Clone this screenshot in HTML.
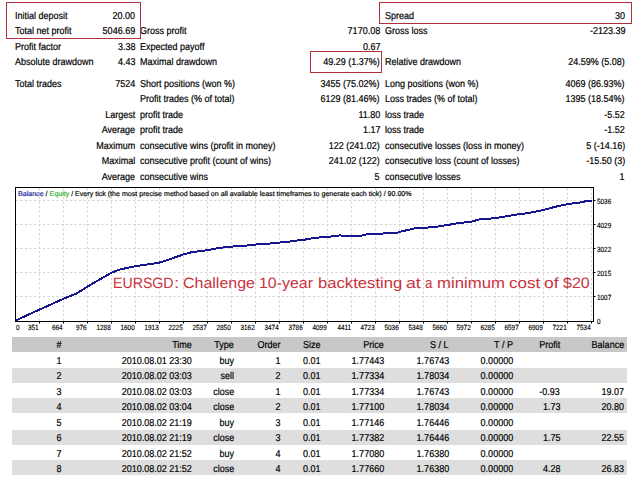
<!DOCTYPE html>
<html><head><meta charset="utf-8"><style>
html,body{margin:0;padding:0;background:#fff;}
body{width:640px;height:480px;overflow:hidden;position:relative;font-family:'Liberation Sans',sans-serif;text-rendering:geometricPrecision;}
div{white-space:nowrap;}
.s{-webkit-text-stroke:0.2px #000;}
.s2{-webkit-text-stroke:0.15px #000;}
</style></head><body>
<div class="s" style="position:absolute;left:15px;top:11.00px;font-size:10px;line-height:12px;color:#000;transform:scaleX(0.9);transform-origin:0 0;">Initial deposit</div>
<div class="s" style="position:absolute;right:505px;top:11.00px;font-size:10px;line-height:12px;color:#000;transform:scaleX(0.9);transform-origin:100% 0;text-align:right;">20.00</div>
<div class="s" style="position:absolute;left:385px;top:11.00px;font-size:10px;line-height:12px;color:#000;transform:scaleX(0.9);transform-origin:0 0;">Spread</div>
<div class="s" style="position:absolute;right:15px;top:11.00px;font-size:10px;line-height:12px;color:#000;transform:scaleX(0.9);transform-origin:100% 0;text-align:right;">30</div>
<div class="s" style="position:absolute;left:15px;top:26.00px;font-size:10px;line-height:12px;color:#000;transform:scaleX(0.9);transform-origin:0 0;">Total net profit</div>
<div class="s" style="position:absolute;right:505px;top:26.00px;font-size:10px;line-height:12px;color:#000;transform:scaleX(0.9);transform-origin:100% 0;text-align:right;">5046.69</div>
<div class="s" style="position:absolute;left:140.4px;top:26.00px;font-size:10px;line-height:12px;color:#000;transform:scaleX(0.9);transform-origin:0 0;">Gross profit</div>
<div class="s" style="position:absolute;right:260px;top:26.00px;font-size:10px;line-height:12px;color:#000;transform:scaleX(0.9);transform-origin:100% 0;text-align:right;">7170.08</div>
<div class="s" style="position:absolute;left:385px;top:26.00px;font-size:10px;line-height:12px;color:#000;transform:scaleX(0.9);transform-origin:0 0;">Gross loss</div>
<div class="s" style="position:absolute;right:15px;top:26.00px;font-size:10px;line-height:12px;color:#000;transform:scaleX(0.9);transform-origin:100% 0;text-align:right;">-2123.39</div>
<div class="s" style="position:absolute;left:15px;top:42.00px;font-size:10px;line-height:12px;color:#000;transform:scaleX(0.9);transform-origin:0 0;">Profit factor</div>
<div class="s" style="position:absolute;right:505px;top:42.00px;font-size:10px;line-height:12px;color:#000;transform:scaleX(0.9);transform-origin:100% 0;text-align:right;">3.38</div>
<div class="s" style="position:absolute;left:140.4px;top:42.00px;font-size:10px;line-height:12px;color:#000;transform:scaleX(0.9);transform-origin:0 0;">Expected payoff</div>
<div class="s" style="position:absolute;right:260px;top:42.00px;font-size:10px;line-height:12px;color:#000;transform:scaleX(0.9);transform-origin:100% 0;text-align:right;">0.67</div>
<div class="s" style="position:absolute;left:15px;top:57.00px;font-size:10px;line-height:12px;color:#000;transform:scaleX(0.9);transform-origin:0 0;">Absolute drawdown</div>
<div class="s" style="position:absolute;right:505px;top:57.00px;font-size:10px;line-height:12px;color:#000;transform:scaleX(0.9);transform-origin:100% 0;text-align:right;">4.43</div>
<div class="s" style="position:absolute;left:140.4px;top:57.00px;font-size:10px;line-height:12px;color:#000;transform:scaleX(0.9);transform-origin:0 0;">Maximal drawdown</div>
<div class="s" style="position:absolute;right:260px;top:57.00px;font-size:10px;line-height:12px;color:#000;transform:scaleX(0.9);transform-origin:100% 0;text-align:right;">49.29 (1.37%)</div>
<div class="s" style="position:absolute;left:385px;top:57.00px;font-size:10px;line-height:12px;color:#000;transform:scaleX(0.9);transform-origin:0 0;">Relative drawdown</div>
<div class="s" style="position:absolute;right:15px;top:57.00px;font-size:10px;line-height:12px;color:#000;transform:scaleX(0.9);transform-origin:100% 0;text-align:right;">24.59% (5.08)</div>
<div class="s" style="position:absolute;left:15px;top:79.00px;font-size:10px;line-height:12px;color:#000;transform:scaleX(0.9);transform-origin:0 0;">Total trades</div>
<div class="s" style="position:absolute;right:505px;top:79.00px;font-size:10px;line-height:12px;color:#000;transform:scaleX(0.9);transform-origin:100% 0;text-align:right;">7524</div>
<div class="s" style="position:absolute;left:140.4px;top:79.00px;font-size:10px;line-height:12px;color:#000;transform:scaleX(0.9);transform-origin:0 0;">Short positions (won %)</div>
<div class="s" style="position:absolute;right:260px;top:79.00px;font-size:10px;line-height:12px;color:#000;transform:scaleX(0.9);transform-origin:100% 0;text-align:right;">3455 (75.02%)</div>
<div class="s" style="position:absolute;left:385px;top:79.00px;font-size:10px;line-height:12px;color:#000;transform:scaleX(0.9);transform-origin:0 0;">Long positions (won %)</div>
<div class="s" style="position:absolute;right:15px;top:79.00px;font-size:10px;line-height:12px;color:#000;transform:scaleX(0.9);transform-origin:100% 0;text-align:right;">4069 (86.93%)</div>
<div class="s" style="position:absolute;left:140.4px;top:94.00px;font-size:10px;line-height:12px;color:#000;transform:scaleX(0.9);transform-origin:0 0;">Profit trades (% of total)</div>
<div class="s" style="position:absolute;right:260px;top:94.00px;font-size:10px;line-height:12px;color:#000;transform:scaleX(0.9);transform-origin:100% 0;text-align:right;">6129 (81.46%)</div>
<div class="s" style="position:absolute;left:385px;top:94.00px;font-size:10px;line-height:12px;color:#000;transform:scaleX(0.9);transform-origin:0 0;">Loss trades (% of total)</div>
<div class="s" style="position:absolute;right:15px;top:94.00px;font-size:10px;line-height:12px;color:#000;transform:scaleX(0.9);transform-origin:100% 0;text-align:right;">1395 (18.54%)</div>
<div class="s" style="position:absolute;right:505px;top:110.00px;font-size:10px;line-height:12px;color:#000;transform:scaleX(0.9);transform-origin:100% 0;text-align:right;">Largest</div>
<div class="s" style="position:absolute;left:140.4px;top:110.00px;font-size:10px;line-height:12px;color:#000;transform:scaleX(0.9);transform-origin:0 0;">profit trade</div>
<div class="s" style="position:absolute;right:260px;top:110.00px;font-size:10px;line-height:12px;color:#000;transform:scaleX(0.9);transform-origin:100% 0;text-align:right;">11.80</div>
<div class="s" style="position:absolute;left:385px;top:110.00px;font-size:10px;line-height:12px;color:#000;transform:scaleX(0.9);transform-origin:0 0;">loss trade</div>
<div class="s" style="position:absolute;right:15px;top:110.00px;font-size:10px;line-height:12px;color:#000;transform:scaleX(0.9);transform-origin:100% 0;text-align:right;">-5.52</div>
<div class="s" style="position:absolute;right:505px;top:125.00px;font-size:10px;line-height:12px;color:#000;transform:scaleX(0.9);transform-origin:100% 0;text-align:right;">Average</div>
<div class="s" style="position:absolute;left:140.4px;top:125.00px;font-size:10px;line-height:12px;color:#000;transform:scaleX(0.9);transform-origin:0 0;">profit trade</div>
<div class="s" style="position:absolute;right:260px;top:125.00px;font-size:10px;line-height:12px;color:#000;transform:scaleX(0.9);transform-origin:100% 0;text-align:right;">1.17</div>
<div class="s" style="position:absolute;left:385px;top:125.00px;font-size:10px;line-height:12px;color:#000;transform:scaleX(0.9);transform-origin:0 0;">loss trade</div>
<div class="s" style="position:absolute;right:15px;top:125.00px;font-size:10px;line-height:12px;color:#000;transform:scaleX(0.9);transform-origin:100% 0;text-align:right;">-1.52</div>
<div class="s" style="position:absolute;right:505px;top:141.00px;font-size:10px;line-height:12px;color:#000;transform:scaleX(0.9);transform-origin:100% 0;text-align:right;">Maximum</div>
<div class="s" style="position:absolute;left:140.4px;top:141.00px;font-size:10px;line-height:12px;color:#000;transform:scaleX(0.9);transform-origin:0 0;">consecutive wins (profit in money)</div>
<div class="s" style="position:absolute;right:260px;top:141.00px;font-size:10px;line-height:12px;color:#000;transform:scaleX(0.9);transform-origin:100% 0;text-align:right;">122 (241.02)</div>
<div class="s" style="position:absolute;left:385px;top:141.00px;font-size:10px;line-height:12px;color:#000;transform:scaleX(0.9);transform-origin:0 0;">consecutive losses (loss in money)</div>
<div class="s" style="position:absolute;right:15px;top:141.00px;font-size:10px;line-height:12px;color:#000;transform:scaleX(0.9);transform-origin:100% 0;text-align:right;">5 (-14.16)</div>
<div class="s" style="position:absolute;right:505px;top:156.00px;font-size:10px;line-height:12px;color:#000;transform:scaleX(0.9);transform-origin:100% 0;text-align:right;">Maximal</div>
<div class="s" style="position:absolute;left:140.4px;top:156.00px;font-size:10px;line-height:12px;color:#000;transform:scaleX(0.9);transform-origin:0 0;">consecutive profit (count of wins)</div>
<div class="s" style="position:absolute;right:260px;top:156.00px;font-size:10px;line-height:12px;color:#000;transform:scaleX(0.9);transform-origin:100% 0;text-align:right;">241.02 (122)</div>
<div class="s" style="position:absolute;left:385px;top:156.00px;font-size:10px;line-height:12px;color:#000;transform:scaleX(0.9);transform-origin:0 0;">consecutive loss (count of losses)</div>
<div class="s" style="position:absolute;right:15px;top:156.00px;font-size:10px;line-height:12px;color:#000;transform:scaleX(0.9);transform-origin:100% 0;text-align:right;">-15.50 (3)</div>
<div class="s" style="position:absolute;right:505px;top:172.00px;font-size:10px;line-height:12px;color:#000;transform:scaleX(0.9);transform-origin:100% 0;text-align:right;">Average</div>
<div class="s" style="position:absolute;left:140.4px;top:172.00px;font-size:10px;line-height:12px;color:#000;transform:scaleX(0.9);transform-origin:0 0;">consecutive wins</div>
<div class="s" style="position:absolute;right:260px;top:172.00px;font-size:10px;line-height:12px;color:#000;transform:scaleX(0.9);transform-origin:100% 0;text-align:right;">5</div>
<div class="s" style="position:absolute;left:385px;top:172.00px;font-size:10px;line-height:12px;color:#000;transform:scaleX(0.9);transform-origin:0 0;">consecutive losses</div>
<div class="s" style="position:absolute;right:15px;top:172.00px;font-size:10px;line-height:12px;color:#000;transform:scaleX(0.9);transform-origin:100% 0;text-align:right;">1</div>
<div style="position:absolute;left:6px;top:2px;width:133px;height:35px;border:1px solid #b0303c"></div>
<div style="position:absolute;left:379px;top:2px;width:251px;height:20px;border:1px solid #b0303c"></div>
<div style="position:absolute;left:310px;top:51px;width:70px;height:20px;border:1px solid #b0303c"></div>
<svg style="position:absolute;left:0;top:0" width="640" height="480" viewBox="0 0 640 480"><line x1="39.5" y1="188" x2="39.5" y2="321" stroke="#d4d4d4" stroke-width="1" stroke-dasharray="2.25 2.25"/><line x1="63.5" y1="188" x2="63.5" y2="321" stroke="#d4d4d4" stroke-width="1" stroke-dasharray="2.25 2.25"/><line x1="87.5" y1="188" x2="87.5" y2="321" stroke="#d4d4d4" stroke-width="1" stroke-dasharray="2.25 2.25"/><line x1="111.5" y1="188" x2="111.5" y2="321" stroke="#d4d4d4" stroke-width="1" stroke-dasharray="2.25 2.25"/><line x1="135.5" y1="188" x2="135.5" y2="321" stroke="#d4d4d4" stroke-width="1" stroke-dasharray="2.25 2.25"/><line x1="159.5" y1="188" x2="159.5" y2="321" stroke="#d4d4d4" stroke-width="1" stroke-dasharray="2.25 2.25"/><line x1="183.5" y1="188" x2="183.5" y2="321" stroke="#d4d4d4" stroke-width="1" stroke-dasharray="2.25 2.25"/><line x1="207.5" y1="188" x2="207.5" y2="321" stroke="#d4d4d4" stroke-width="1" stroke-dasharray="2.25 2.25"/><line x1="231.5" y1="188" x2="231.5" y2="321" stroke="#d4d4d4" stroke-width="1" stroke-dasharray="2.25 2.25"/><line x1="255.5" y1="188" x2="255.5" y2="321" stroke="#d4d4d4" stroke-width="1" stroke-dasharray="2.25 2.25"/><line x1="279.5" y1="188" x2="279.5" y2="321" stroke="#d4d4d4" stroke-width="1" stroke-dasharray="2.25 2.25"/><line x1="303.5" y1="188" x2="303.5" y2="321" stroke="#d4d4d4" stroke-width="1" stroke-dasharray="2.25 2.25"/><line x1="327.5" y1="188" x2="327.5" y2="321" stroke="#d4d4d4" stroke-width="1" stroke-dasharray="2.25 2.25"/><line x1="351.5" y1="188" x2="351.5" y2="321" stroke="#d4d4d4" stroke-width="1" stroke-dasharray="2.25 2.25"/><line x1="375.5" y1="188" x2="375.5" y2="321" stroke="#d4d4d4" stroke-width="1" stroke-dasharray="2.25 2.25"/><line x1="399.5" y1="188" x2="399.5" y2="321" stroke="#d4d4d4" stroke-width="1" stroke-dasharray="2.25 2.25"/><line x1="423.5" y1="188" x2="423.5" y2="321" stroke="#d4d4d4" stroke-width="1" stroke-dasharray="2.25 2.25"/><line x1="447.5" y1="188" x2="447.5" y2="321" stroke="#d4d4d4" stroke-width="1" stroke-dasharray="2.25 2.25"/><line x1="471.5" y1="188" x2="471.5" y2="321" stroke="#d4d4d4" stroke-width="1" stroke-dasharray="2.25 2.25"/><line x1="495.5" y1="188" x2="495.5" y2="321" stroke="#d4d4d4" stroke-width="1" stroke-dasharray="2.25 2.25"/><line x1="519.5" y1="188" x2="519.5" y2="321" stroke="#d4d4d4" stroke-width="1" stroke-dasharray="2.25 2.25"/><line x1="543.5" y1="188" x2="543.5" y2="321" stroke="#d4d4d4" stroke-width="1" stroke-dasharray="2.25 2.25"/><line x1="567.5" y1="188" x2="567.5" y2="321" stroke="#d4d4d4" stroke-width="1" stroke-dasharray="2.25 2.25"/><line x1="591.5" y1="188" x2="591.5" y2="321" stroke="#d4d4d4" stroke-width="1" stroke-dasharray="2.25 2.25"/><line x1="16" y1="200.5" x2="593" y2="200.5" stroke="#d4d4d4" stroke-width="1" stroke-dasharray="2.25 2.25"/><line x1="16" y1="224.5" x2="593" y2="224.5" stroke="#d4d4d4" stroke-width="1" stroke-dasharray="2.25 2.25"/><line x1="16" y1="248.5" x2="593" y2="248.5" stroke="#d4d4d4" stroke-width="1" stroke-dasharray="2.25 2.25"/><line x1="16" y1="272.5" x2="593" y2="272.5" stroke="#d4d4d4" stroke-width="1" stroke-dasharray="2.25 2.25"/><line x1="16" y1="296.5" x2="593" y2="296.5" stroke="#d4d4d4" stroke-width="1" stroke-dasharray="2.25 2.25"/><path d="M15.0 320.9 L26.7 315.4 L39.5 309.6 L51.7 304.1 L63.5 298.7 L76.7 293.4 L87.0 286.9 L96.7 281.2 L111.3 272.9 L118.3 269.9 L135.0 266.2 L146.7 264.6 L159.4 262.6 L170.0 259.1 L183.5 254.4 L191.2 252.3 L207.5 250.2 L220.0 247.7 L231.5 246.9 L235.6 245.7 L238.8 246.4 L255.6 244.5 L266.2 244.2 L273.8 242.7 L286.2 242.3 L292.5 241.0 L303.8 239.8 L316.2 237.7 L327.2 236.9 L340.0 235.4 L345.0 236.0 L351.5 236.3 L360.0 236.0 L367.5 234.2 L375.6 234.2 L385.0 233.3 L397.5 232.7 L399.4 231.9 L415.0 228.3 L423.5 227.7 L432.5 227.3 L447.5 225.0 L460.0 222.9 L471.2 221.7 L480.0 219.2 L495.4 218.2 L507.5 216.0 L519.4 214.2 L530.0 212.8 L543.5 209.9 L555.2 206.8 L567.5 204.1 L579.2 202.7 L586.9 201.0 L591.8 200.6" fill="none" stroke="#16168e" stroke-width="2" stroke-linejoin="round" shape-rendering="crispEdges"/><rect x="15.5" y="187.5" width="578" height="134" fill="none" stroke="#000" stroke-width="1"/><line x1="39.5" y1="322" x2="39.5" y2="323.5" stroke="#000" stroke-width="1"/><line x1="63.5" y1="322" x2="63.5" y2="323.5" stroke="#000" stroke-width="1"/><line x1="87.5" y1="322" x2="87.5" y2="323.5" stroke="#000" stroke-width="1"/><line x1="111.5" y1="322" x2="111.5" y2="323.5" stroke="#000" stroke-width="1"/><line x1="135.5" y1="322" x2="135.5" y2="323.5" stroke="#000" stroke-width="1"/><line x1="159.5" y1="322" x2="159.5" y2="323.5" stroke="#000" stroke-width="1"/><line x1="183.5" y1="322" x2="183.5" y2="323.5" stroke="#000" stroke-width="1"/><line x1="207.5" y1="322" x2="207.5" y2="323.5" stroke="#000" stroke-width="1"/><line x1="231.5" y1="322" x2="231.5" y2="323.5" stroke="#000" stroke-width="1"/><line x1="255.5" y1="322" x2="255.5" y2="323.5" stroke="#000" stroke-width="1"/><line x1="279.5" y1="322" x2="279.5" y2="323.5" stroke="#000" stroke-width="1"/><line x1="303.5" y1="322" x2="303.5" y2="323.5" stroke="#000" stroke-width="1"/><line x1="327.5" y1="322" x2="327.5" y2="323.5" stroke="#000" stroke-width="1"/><line x1="351.5" y1="322" x2="351.5" y2="323.5" stroke="#000" stroke-width="1"/><line x1="375.5" y1="322" x2="375.5" y2="323.5" stroke="#000" stroke-width="1"/><line x1="399.5" y1="322" x2="399.5" y2="323.5" stroke="#000" stroke-width="1"/><line x1="423.5" y1="322" x2="423.5" y2="323.5" stroke="#000" stroke-width="1"/><line x1="447.5" y1="322" x2="447.5" y2="323.5" stroke="#000" stroke-width="1"/><line x1="471.5" y1="322" x2="471.5" y2="323.5" stroke="#000" stroke-width="1"/><line x1="495.5" y1="322" x2="495.5" y2="323.5" stroke="#000" stroke-width="1"/><line x1="519.5" y1="322" x2="519.5" y2="323.5" stroke="#000" stroke-width="1"/><line x1="543.5" y1="322" x2="543.5" y2="323.5" stroke="#000" stroke-width="1"/><line x1="567.5" y1="322" x2="567.5" y2="323.5" stroke="#000" stroke-width="1"/><line x1="591.5" y1="322" x2="591.5" y2="323.5" stroke="#000" stroke-width="1"/><line x1="594" y1="200.5" x2="595.5" y2="200.5" stroke="#000" stroke-width="1"/><line x1="594" y1="224.5" x2="595.5" y2="224.5" stroke="#000" stroke-width="1"/><line x1="594" y1="248.5" x2="595.5" y2="248.5" stroke="#000" stroke-width="1"/><line x1="594" y1="272.5" x2="595.5" y2="272.5" stroke="#000" stroke-width="1"/><line x1="594" y1="296.5" x2="595.5" y2="296.5" stroke="#000" stroke-width="1"/></svg>
<div style="position:absolute;left:18.2px;top:191.00px;font-size:7px;line-height:8px;white-space:nowrap;color:#000;-webkit-text-stroke:0.18px currentColor;transform:scaleX(1.0115);transform-origin:0 0"><span style="color:#24249a">Balance</span> / <span style="color:#30b030">Equity</span> / Every tick (the most precise method based on all available least timeframes to generate each tick) / 90.00%</div>
<div class="s2" style="position:absolute;left:16px;top:323.00px;font-size:7.5px;line-height:9px;color:#000;transform:scaleX(0.85);transform-origin:0 0;">0</div>
<div class="s2" style="position:absolute;right:601px;top:323.00px;font-size:7.5px;line-height:9px;color:#000;transform:scaleX(0.85);transform-origin:100% 0;text-align:right;">351</div>
<div class="s2" style="position:absolute;right:577px;top:323.00px;font-size:7.5px;line-height:9px;color:#000;transform:scaleX(0.85);transform-origin:100% 0;text-align:right;">664</div>
<div class="s2" style="position:absolute;right:553px;top:323.00px;font-size:7.5px;line-height:9px;color:#000;transform:scaleX(0.85);transform-origin:100% 0;text-align:right;">976</div>
<div class="s2" style="position:absolute;right:529px;top:323.00px;font-size:7.5px;line-height:9px;color:#000;transform:scaleX(0.85);transform-origin:100% 0;text-align:right;">1288</div>
<div class="s2" style="position:absolute;right:505px;top:323.00px;font-size:7.5px;line-height:9px;color:#000;transform:scaleX(0.85);transform-origin:100% 0;text-align:right;">1600</div>
<div class="s2" style="position:absolute;right:481px;top:323.00px;font-size:7.5px;line-height:9px;color:#000;transform:scaleX(0.85);transform-origin:100% 0;text-align:right;">1913</div>
<div class="s2" style="position:absolute;right:457px;top:323.00px;font-size:7.5px;line-height:9px;color:#000;transform:scaleX(0.85);transform-origin:100% 0;text-align:right;">2225</div>
<div class="s2" style="position:absolute;right:433px;top:323.00px;font-size:7.5px;line-height:9px;color:#000;transform:scaleX(0.85);transform-origin:100% 0;text-align:right;">2537</div>
<div class="s2" style="position:absolute;right:409px;top:323.00px;font-size:7.5px;line-height:9px;color:#000;transform:scaleX(0.85);transform-origin:100% 0;text-align:right;">2850</div>
<div class="s2" style="position:absolute;right:385px;top:323.00px;font-size:7.5px;line-height:9px;color:#000;transform:scaleX(0.85);transform-origin:100% 0;text-align:right;">3162</div>
<div class="s2" style="position:absolute;right:361px;top:323.00px;font-size:7.5px;line-height:9px;color:#000;transform:scaleX(0.85);transform-origin:100% 0;text-align:right;">3474</div>
<div class="s2" style="position:absolute;right:337px;top:323.00px;font-size:7.5px;line-height:9px;color:#000;transform:scaleX(0.85);transform-origin:100% 0;text-align:right;">3786</div>
<div class="s2" style="position:absolute;right:313px;top:323.00px;font-size:7.5px;line-height:9px;color:#000;transform:scaleX(0.85);transform-origin:100% 0;text-align:right;">4099</div>
<div class="s2" style="position:absolute;right:289px;top:323.00px;font-size:7.5px;line-height:9px;color:#000;transform:scaleX(0.85);transform-origin:100% 0;text-align:right;">4411</div>
<div class="s2" style="position:absolute;right:265px;top:323.00px;font-size:7.5px;line-height:9px;color:#000;transform:scaleX(0.85);transform-origin:100% 0;text-align:right;">4723</div>
<div class="s2" style="position:absolute;right:241px;top:323.00px;font-size:7.5px;line-height:9px;color:#000;transform:scaleX(0.85);transform-origin:100% 0;text-align:right;">5036</div>
<div class="s2" style="position:absolute;right:217px;top:323.00px;font-size:7.5px;line-height:9px;color:#000;transform:scaleX(0.85);transform-origin:100% 0;text-align:right;">5348</div>
<div class="s2" style="position:absolute;right:193px;top:323.00px;font-size:7.5px;line-height:9px;color:#000;transform:scaleX(0.85);transform-origin:100% 0;text-align:right;">5660</div>
<div class="s2" style="position:absolute;right:169px;top:323.00px;font-size:7.5px;line-height:9px;color:#000;transform:scaleX(0.85);transform-origin:100% 0;text-align:right;">5972</div>
<div class="s2" style="position:absolute;right:145px;top:323.00px;font-size:7.5px;line-height:9px;color:#000;transform:scaleX(0.85);transform-origin:100% 0;text-align:right;">6285</div>
<div class="s2" style="position:absolute;right:121px;top:323.00px;font-size:7.5px;line-height:9px;color:#000;transform:scaleX(0.85);transform-origin:100% 0;text-align:right;">6597</div>
<div class="s2" style="position:absolute;right:97px;top:323.00px;font-size:7.5px;line-height:9px;color:#000;transform:scaleX(0.85);transform-origin:100% 0;text-align:right;">6909</div>
<div class="s2" style="position:absolute;right:73px;top:323.00px;font-size:7.5px;line-height:9px;color:#000;transform:scaleX(0.85);transform-origin:100% 0;text-align:right;">7221</div>
<div class="s2" style="position:absolute;right:49px;top:323.00px;font-size:7.5px;line-height:9px;color:#000;transform:scaleX(0.85);transform-origin:100% 0;text-align:right;">7534</div>
<div class="s2" style="position:absolute;left:597px;top:197.00px;font-size:7.5px;line-height:9px;color:#000;transform:scaleX(0.85);transform-origin:0 0;">5036</div>
<div class="s2" style="position:absolute;left:597px;top:221.00px;font-size:7.5px;line-height:9px;color:#000;transform:scaleX(0.85);transform-origin:0 0;">4029</div>
<div class="s2" style="position:absolute;left:597px;top:245.00px;font-size:7.5px;line-height:9px;color:#000;transform:scaleX(0.85);transform-origin:0 0;">3022</div>
<div class="s2" style="position:absolute;left:597px;top:269.00px;font-size:7.5px;line-height:9px;color:#000;transform:scaleX(0.85);transform-origin:0 0;">2015</div>
<div class="s2" style="position:absolute;left:597px;top:293.00px;font-size:7.5px;line-height:9px;color:#000;transform:scaleX(0.85);transform-origin:0 0;">1007</div>
<div class="s2" style="position:absolute;left:597px;top:317.00px;font-size:7.5px;line-height:9px;color:#000;transform:scaleX(0.85);transform-origin:0 0;">0</div>
<div style="position:absolute;left:112.81px;top:274.50px;font-size:15px;line-height:18px;color:#c8323c;transform:scaleX(0.9435);transform-origin:0 0;">EURSGD</div>
<div style="position:absolute;left:174.35px;top:274.50px;font-size:15px;line-height:18px;color:#c8323c;transform:scaleX(1.25);transform-origin:0 0;">:</div>
<div style="position:absolute;left:182.69px;top:274.50px;font-size:15px;line-height:18px;color:#c8323c;transform:scaleX(1.0644);transform-origin:0 0;">Challenge</div>
<div style="position:absolute;left:258.94px;top:274.50px;font-size:15px;line-height:18px;color:#c8323c;transform:scaleX(1.062);transform-origin:0 0;">10-year</div>
<div style="position:absolute;left:317.78999999999996px;top:274.50px;font-size:15px;line-height:18px;color:#c8323c;transform:scaleX(1.1108);transform-origin:0 0;">backtesting</div>
<div style="position:absolute;left:406.33px;top:274.50px;font-size:15px;line-height:18px;color:#c8323c;transform:scaleX(1.1727);transform-origin:0 0;">at</div>
<div style="position:absolute;left:424.61px;top:274.50px;font-size:15px;line-height:18px;color:#c8323c;transform:scaleX(0.8857);transform-origin:0 0;">a</div>
<div style="position:absolute;left:436.98px;top:274.50px;font-size:15px;line-height:18px;color:#c8323c;transform:scaleX(1.1169);transform-origin:0 0;">minimum</div>
<div style="position:absolute;left:508.76px;top:274.50px;font-size:15px;line-height:18px;color:#c8323c;transform:scaleX(1.1385);transform-origin:0 0;">cost</div>
<div style="position:absolute;left:543.9300000000001px;top:274.50px;font-size:15px;line-height:18px;color:#c8323c;transform:scaleX(1.1667);transform-origin:0 0;">of</div>
<div style="position:absolute;left:562.7299999999999px;top:274.50px;font-size:15px;line-height:18px;color:#c8323c;transform:scaleX(1.0667);transform-origin:0 0;">$20</div>
<div style="position:absolute;left:12px;top:337px;width:615px;height:15px;background:#c8c8c8"></div>
<div style="position:absolute;left:12px;top:368px;width:615px;height:15px;background:#dedede"></div>
<div style="position:absolute;left:12px;top:398px;width:615px;height:15px;background:#dedede"></div>
<div style="position:absolute;left:12px;top:430px;width:615px;height:15px;background:#dedede"></div>
<div style="position:absolute;left:12px;top:460px;width:615px;height:15px;background:#dedede"></div>
<div class="s" style="position:absolute;left:-41.5px;width:200px;top:340.00px;font-size:10px;line-height:12px;color:#000;transform:scaleX(0.9);transform-origin:50% 0;text-align:center;">#</div>
<div class="s" style="position:absolute;right:448px;top:340.00px;font-size:10px;line-height:12px;color:#000;transform:scaleX(0.9);transform-origin:100% 0;text-align:right;">Time</div>
<div class="s" style="position:absolute;right:406px;top:340.00px;font-size:10px;line-height:12px;color:#000;transform:scaleX(0.9);transform-origin:100% 0;text-align:right;">Type</div>
<div class="s" style="position:absolute;right:359px;top:340.00px;font-size:10px;line-height:12px;color:#000;transform:scaleX(0.9);transform-origin:100% 0;text-align:right;">Order</div>
<div class="s" style="position:absolute;right:320px;top:340.00px;font-size:10px;line-height:12px;color:#000;transform:scaleX(0.9);transform-origin:100% 0;text-align:right;">Size</div>
<div class="s" style="position:absolute;right:256px;top:340.00px;font-size:10px;line-height:12px;color:#000;transform:scaleX(0.9);transform-origin:100% 0;text-align:right;">Price</div>
<div class="s" style="position:absolute;right:191px;top:340.00px;font-size:10px;line-height:12px;color:#000;transform:scaleX(0.9);transform-origin:100% 0;text-align:right;">S / L</div>
<div class="s" style="position:absolute;right:127px;top:340.00px;font-size:10px;line-height:12px;color:#000;transform:scaleX(0.9);transform-origin:100% 0;text-align:right;">T / P</div>
<div class="s" style="position:absolute;right:80px;top:340.00px;font-size:10px;line-height:12px;color:#000;transform:scaleX(0.9);transform-origin:100% 0;text-align:right;">Profit</div>
<div class="s" style="position:absolute;right:16px;top:340.00px;font-size:10px;line-height:12px;color:#000;transform:scaleX(0.9);transform-origin:100% 0;text-align:right;">Balance</div>
<div class="s" style="position:absolute;left:-41.5px;width:200px;top:356.00px;font-size:10px;line-height:12px;color:#000;transform:scaleX(0.9);transform-origin:50% 0;text-align:center;">1</div>
<div class="s" style="position:absolute;right:448px;top:356.00px;font-size:10px;line-height:12px;color:#000;transform:scaleX(0.9);transform-origin:100% 0;text-align:right;">2010.08.01 23:30</div>
<div class="s" style="position:absolute;right:406px;top:356.00px;font-size:10px;line-height:12px;color:#000;transform:scaleX(0.9);transform-origin:100% 0;text-align:right;">buy</div>
<div class="s" style="position:absolute;right:359px;top:356.00px;font-size:10px;line-height:12px;color:#000;transform:scaleX(0.9);transform-origin:100% 0;text-align:right;">1</div>
<div class="s" style="position:absolute;right:320px;top:356.00px;font-size:10px;line-height:12px;color:#000;transform:scaleX(0.9);transform-origin:100% 0;text-align:right;">0.01</div>
<div class="s" style="position:absolute;right:256px;top:356.00px;font-size:10px;line-height:12px;color:#000;transform:scaleX(0.9);transform-origin:100% 0;text-align:right;">1.77443</div>
<div class="s" style="position:absolute;right:191px;top:356.00px;font-size:10px;line-height:12px;color:#000;transform:scaleX(0.9);transform-origin:100% 0;text-align:right;">1.76743</div>
<div class="s" style="position:absolute;right:127px;top:356.00px;font-size:10px;line-height:12px;color:#000;transform:scaleX(0.9);transform-origin:100% 0;text-align:right;">0.00000</div>
<div class="s" style="position:absolute;left:-41.5px;width:200px;top:371.00px;font-size:10px;line-height:12px;color:#000;transform:scaleX(0.9);transform-origin:50% 0;text-align:center;">2</div>
<div class="s" style="position:absolute;right:448px;top:371.00px;font-size:10px;line-height:12px;color:#000;transform:scaleX(0.9);transform-origin:100% 0;text-align:right;">2010.08.02 03:03</div>
<div class="s" style="position:absolute;right:406px;top:371.00px;font-size:10px;line-height:12px;color:#000;transform:scaleX(0.9);transform-origin:100% 0;text-align:right;">sell</div>
<div class="s" style="position:absolute;right:359px;top:371.00px;font-size:10px;line-height:12px;color:#000;transform:scaleX(0.9);transform-origin:100% 0;text-align:right;">2</div>
<div class="s" style="position:absolute;right:320px;top:371.00px;font-size:10px;line-height:12px;color:#000;transform:scaleX(0.9);transform-origin:100% 0;text-align:right;">0.01</div>
<div class="s" style="position:absolute;right:256px;top:371.00px;font-size:10px;line-height:12px;color:#000;transform:scaleX(0.9);transform-origin:100% 0;text-align:right;">1.77334</div>
<div class="s" style="position:absolute;right:191px;top:371.00px;font-size:10px;line-height:12px;color:#000;transform:scaleX(0.9);transform-origin:100% 0;text-align:right;">1.78034</div>
<div class="s" style="position:absolute;right:127px;top:371.00px;font-size:10px;line-height:12px;color:#000;transform:scaleX(0.9);transform-origin:100% 0;text-align:right;">0.00000</div>
<div class="s" style="position:absolute;left:-41.5px;width:200px;top:387.00px;font-size:10px;line-height:12px;color:#000;transform:scaleX(0.9);transform-origin:50% 0;text-align:center;">3</div>
<div class="s" style="position:absolute;right:448px;top:387.00px;font-size:10px;line-height:12px;color:#000;transform:scaleX(0.9);transform-origin:100% 0;text-align:right;">2010.08.02 03:03</div>
<div class="s" style="position:absolute;right:406px;top:387.00px;font-size:10px;line-height:12px;color:#000;transform:scaleX(0.9);transform-origin:100% 0;text-align:right;">close</div>
<div class="s" style="position:absolute;right:359px;top:387.00px;font-size:10px;line-height:12px;color:#000;transform:scaleX(0.9);transform-origin:100% 0;text-align:right;">1</div>
<div class="s" style="position:absolute;right:320px;top:387.00px;font-size:10px;line-height:12px;color:#000;transform:scaleX(0.9);transform-origin:100% 0;text-align:right;">0.01</div>
<div class="s" style="position:absolute;right:256px;top:387.00px;font-size:10px;line-height:12px;color:#000;transform:scaleX(0.9);transform-origin:100% 0;text-align:right;">1.77334</div>
<div class="s" style="position:absolute;right:191px;top:387.00px;font-size:10px;line-height:12px;color:#000;transform:scaleX(0.9);transform-origin:100% 0;text-align:right;">1.76743</div>
<div class="s" style="position:absolute;right:127px;top:387.00px;font-size:10px;line-height:12px;color:#000;transform:scaleX(0.9);transform-origin:100% 0;text-align:right;">0.00000</div>
<div class="s" style="position:absolute;right:80px;top:387.00px;font-size:10px;line-height:12px;color:#000;transform:scaleX(0.9);transform-origin:100% 0;text-align:right;">-0.93</div>
<div class="s" style="position:absolute;right:16px;top:387.00px;font-size:10px;line-height:12px;color:#000;transform:scaleX(0.9);transform-origin:100% 0;text-align:right;">19.07</div>
<div class="s" style="position:absolute;left:-41.5px;width:200px;top:402.00px;font-size:10px;line-height:12px;color:#000;transform:scaleX(0.9);transform-origin:50% 0;text-align:center;">4</div>
<div class="s" style="position:absolute;right:448px;top:402.00px;font-size:10px;line-height:12px;color:#000;transform:scaleX(0.9);transform-origin:100% 0;text-align:right;">2010.08.02 03:04</div>
<div class="s" style="position:absolute;right:406px;top:402.00px;font-size:10px;line-height:12px;color:#000;transform:scaleX(0.9);transform-origin:100% 0;text-align:right;">close</div>
<div class="s" style="position:absolute;right:359px;top:402.00px;font-size:10px;line-height:12px;color:#000;transform:scaleX(0.9);transform-origin:100% 0;text-align:right;">2</div>
<div class="s" style="position:absolute;right:320px;top:402.00px;font-size:10px;line-height:12px;color:#000;transform:scaleX(0.9);transform-origin:100% 0;text-align:right;">0.01</div>
<div class="s" style="position:absolute;right:256px;top:402.00px;font-size:10px;line-height:12px;color:#000;transform:scaleX(0.9);transform-origin:100% 0;text-align:right;">1.77100</div>
<div class="s" style="position:absolute;right:191px;top:402.00px;font-size:10px;line-height:12px;color:#000;transform:scaleX(0.9);transform-origin:100% 0;text-align:right;">1.78034</div>
<div class="s" style="position:absolute;right:127px;top:402.00px;font-size:10px;line-height:12px;color:#000;transform:scaleX(0.9);transform-origin:100% 0;text-align:right;">0.00000</div>
<div class="s" style="position:absolute;right:80px;top:402.00px;font-size:10px;line-height:12px;color:#000;transform:scaleX(0.9);transform-origin:100% 0;text-align:right;">1.73</div>
<div class="s" style="position:absolute;right:16px;top:402.00px;font-size:10px;line-height:12px;color:#000;transform:scaleX(0.9);transform-origin:100% 0;text-align:right;">20.80</div>
<div class="s" style="position:absolute;left:-41.5px;width:200px;top:418.00px;font-size:10px;line-height:12px;color:#000;transform:scaleX(0.9);transform-origin:50% 0;text-align:center;">5</div>
<div class="s" style="position:absolute;right:448px;top:418.00px;font-size:10px;line-height:12px;color:#000;transform:scaleX(0.9);transform-origin:100% 0;text-align:right;">2010.08.02 21:19</div>
<div class="s" style="position:absolute;right:406px;top:418.00px;font-size:10px;line-height:12px;color:#000;transform:scaleX(0.9);transform-origin:100% 0;text-align:right;">buy</div>
<div class="s" style="position:absolute;right:359px;top:418.00px;font-size:10px;line-height:12px;color:#000;transform:scaleX(0.9);transform-origin:100% 0;text-align:right;">3</div>
<div class="s" style="position:absolute;right:320px;top:418.00px;font-size:10px;line-height:12px;color:#000;transform:scaleX(0.9);transform-origin:100% 0;text-align:right;">0.01</div>
<div class="s" style="position:absolute;right:256px;top:418.00px;font-size:10px;line-height:12px;color:#000;transform:scaleX(0.9);transform-origin:100% 0;text-align:right;">1.77146</div>
<div class="s" style="position:absolute;right:191px;top:418.00px;font-size:10px;line-height:12px;color:#000;transform:scaleX(0.9);transform-origin:100% 0;text-align:right;">1.76446</div>
<div class="s" style="position:absolute;right:127px;top:418.00px;font-size:10px;line-height:12px;color:#000;transform:scaleX(0.9);transform-origin:100% 0;text-align:right;">0.00000</div>
<div class="s" style="position:absolute;left:-41.5px;width:200px;top:433.00px;font-size:10px;line-height:12px;color:#000;transform:scaleX(0.9);transform-origin:50% 0;text-align:center;">6</div>
<div class="s" style="position:absolute;right:448px;top:433.00px;font-size:10px;line-height:12px;color:#000;transform:scaleX(0.9);transform-origin:100% 0;text-align:right;">2010.08.02 21:19</div>
<div class="s" style="position:absolute;right:406px;top:433.00px;font-size:10px;line-height:12px;color:#000;transform:scaleX(0.9);transform-origin:100% 0;text-align:right;">close</div>
<div class="s" style="position:absolute;right:359px;top:433.00px;font-size:10px;line-height:12px;color:#000;transform:scaleX(0.9);transform-origin:100% 0;text-align:right;">3</div>
<div class="s" style="position:absolute;right:320px;top:433.00px;font-size:10px;line-height:12px;color:#000;transform:scaleX(0.9);transform-origin:100% 0;text-align:right;">0.01</div>
<div class="s" style="position:absolute;right:256px;top:433.00px;font-size:10px;line-height:12px;color:#000;transform:scaleX(0.9);transform-origin:100% 0;text-align:right;">1.77382</div>
<div class="s" style="position:absolute;right:191px;top:433.00px;font-size:10px;line-height:12px;color:#000;transform:scaleX(0.9);transform-origin:100% 0;text-align:right;">1.76446</div>
<div class="s" style="position:absolute;right:127px;top:433.00px;font-size:10px;line-height:12px;color:#000;transform:scaleX(0.9);transform-origin:100% 0;text-align:right;">0.00000</div>
<div class="s" style="position:absolute;right:80px;top:433.00px;font-size:10px;line-height:12px;color:#000;transform:scaleX(0.9);transform-origin:100% 0;text-align:right;">1.75</div>
<div class="s" style="position:absolute;right:16px;top:433.00px;font-size:10px;line-height:12px;color:#000;transform:scaleX(0.9);transform-origin:100% 0;text-align:right;">22.55</div>
<div class="s" style="position:absolute;left:-41.5px;width:200px;top:449.00px;font-size:10px;line-height:12px;color:#000;transform:scaleX(0.9);transform-origin:50% 0;text-align:center;">7</div>
<div class="s" style="position:absolute;right:448px;top:449.00px;font-size:10px;line-height:12px;color:#000;transform:scaleX(0.9);transform-origin:100% 0;text-align:right;">2010.08.02 21:52</div>
<div class="s" style="position:absolute;right:406px;top:449.00px;font-size:10px;line-height:12px;color:#000;transform:scaleX(0.9);transform-origin:100% 0;text-align:right;">buy</div>
<div class="s" style="position:absolute;right:359px;top:449.00px;font-size:10px;line-height:12px;color:#000;transform:scaleX(0.9);transform-origin:100% 0;text-align:right;">4</div>
<div class="s" style="position:absolute;right:320px;top:449.00px;font-size:10px;line-height:12px;color:#000;transform:scaleX(0.9);transform-origin:100% 0;text-align:right;">0.01</div>
<div class="s" style="position:absolute;right:256px;top:449.00px;font-size:10px;line-height:12px;color:#000;transform:scaleX(0.9);transform-origin:100% 0;text-align:right;">1.77080</div>
<div class="s" style="position:absolute;right:191px;top:449.00px;font-size:10px;line-height:12px;color:#000;transform:scaleX(0.9);transform-origin:100% 0;text-align:right;">1.76380</div>
<div class="s" style="position:absolute;right:127px;top:449.00px;font-size:10px;line-height:12px;color:#000;transform:scaleX(0.9);transform-origin:100% 0;text-align:right;">0.00000</div>
<div class="s" style="position:absolute;left:-41.5px;width:200px;top:464.00px;font-size:10px;line-height:12px;color:#000;transform:scaleX(0.9);transform-origin:50% 0;text-align:center;">8</div>
<div class="s" style="position:absolute;right:448px;top:464.00px;font-size:10px;line-height:12px;color:#000;transform:scaleX(0.9);transform-origin:100% 0;text-align:right;">2010.08.02 21:52</div>
<div class="s" style="position:absolute;right:406px;top:464.00px;font-size:10px;line-height:12px;color:#000;transform:scaleX(0.9);transform-origin:100% 0;text-align:right;">close</div>
<div class="s" style="position:absolute;right:359px;top:464.00px;font-size:10px;line-height:12px;color:#000;transform:scaleX(0.9);transform-origin:100% 0;text-align:right;">4</div>
<div class="s" style="position:absolute;right:320px;top:464.00px;font-size:10px;line-height:12px;color:#000;transform:scaleX(0.9);transform-origin:100% 0;text-align:right;">0.01</div>
<div class="s" style="position:absolute;right:256px;top:464.00px;font-size:10px;line-height:12px;color:#000;transform:scaleX(0.9);transform-origin:100% 0;text-align:right;">1.77660</div>
<div class="s" style="position:absolute;right:191px;top:464.00px;font-size:10px;line-height:12px;color:#000;transform:scaleX(0.9);transform-origin:100% 0;text-align:right;">1.76380</div>
<div class="s" style="position:absolute;right:127px;top:464.00px;font-size:10px;line-height:12px;color:#000;transform:scaleX(0.9);transform-origin:100% 0;text-align:right;">0.00000</div>
<div class="s" style="position:absolute;right:80px;top:464.00px;font-size:10px;line-height:12px;color:#000;transform:scaleX(0.9);transform-origin:100% 0;text-align:right;">4.28</div>
<div class="s" style="position:absolute;right:16px;top:464.00px;font-size:10px;line-height:12px;color:#000;transform:scaleX(0.9);transform-origin:100% 0;text-align:right;">26.83</div>
</body></html>
